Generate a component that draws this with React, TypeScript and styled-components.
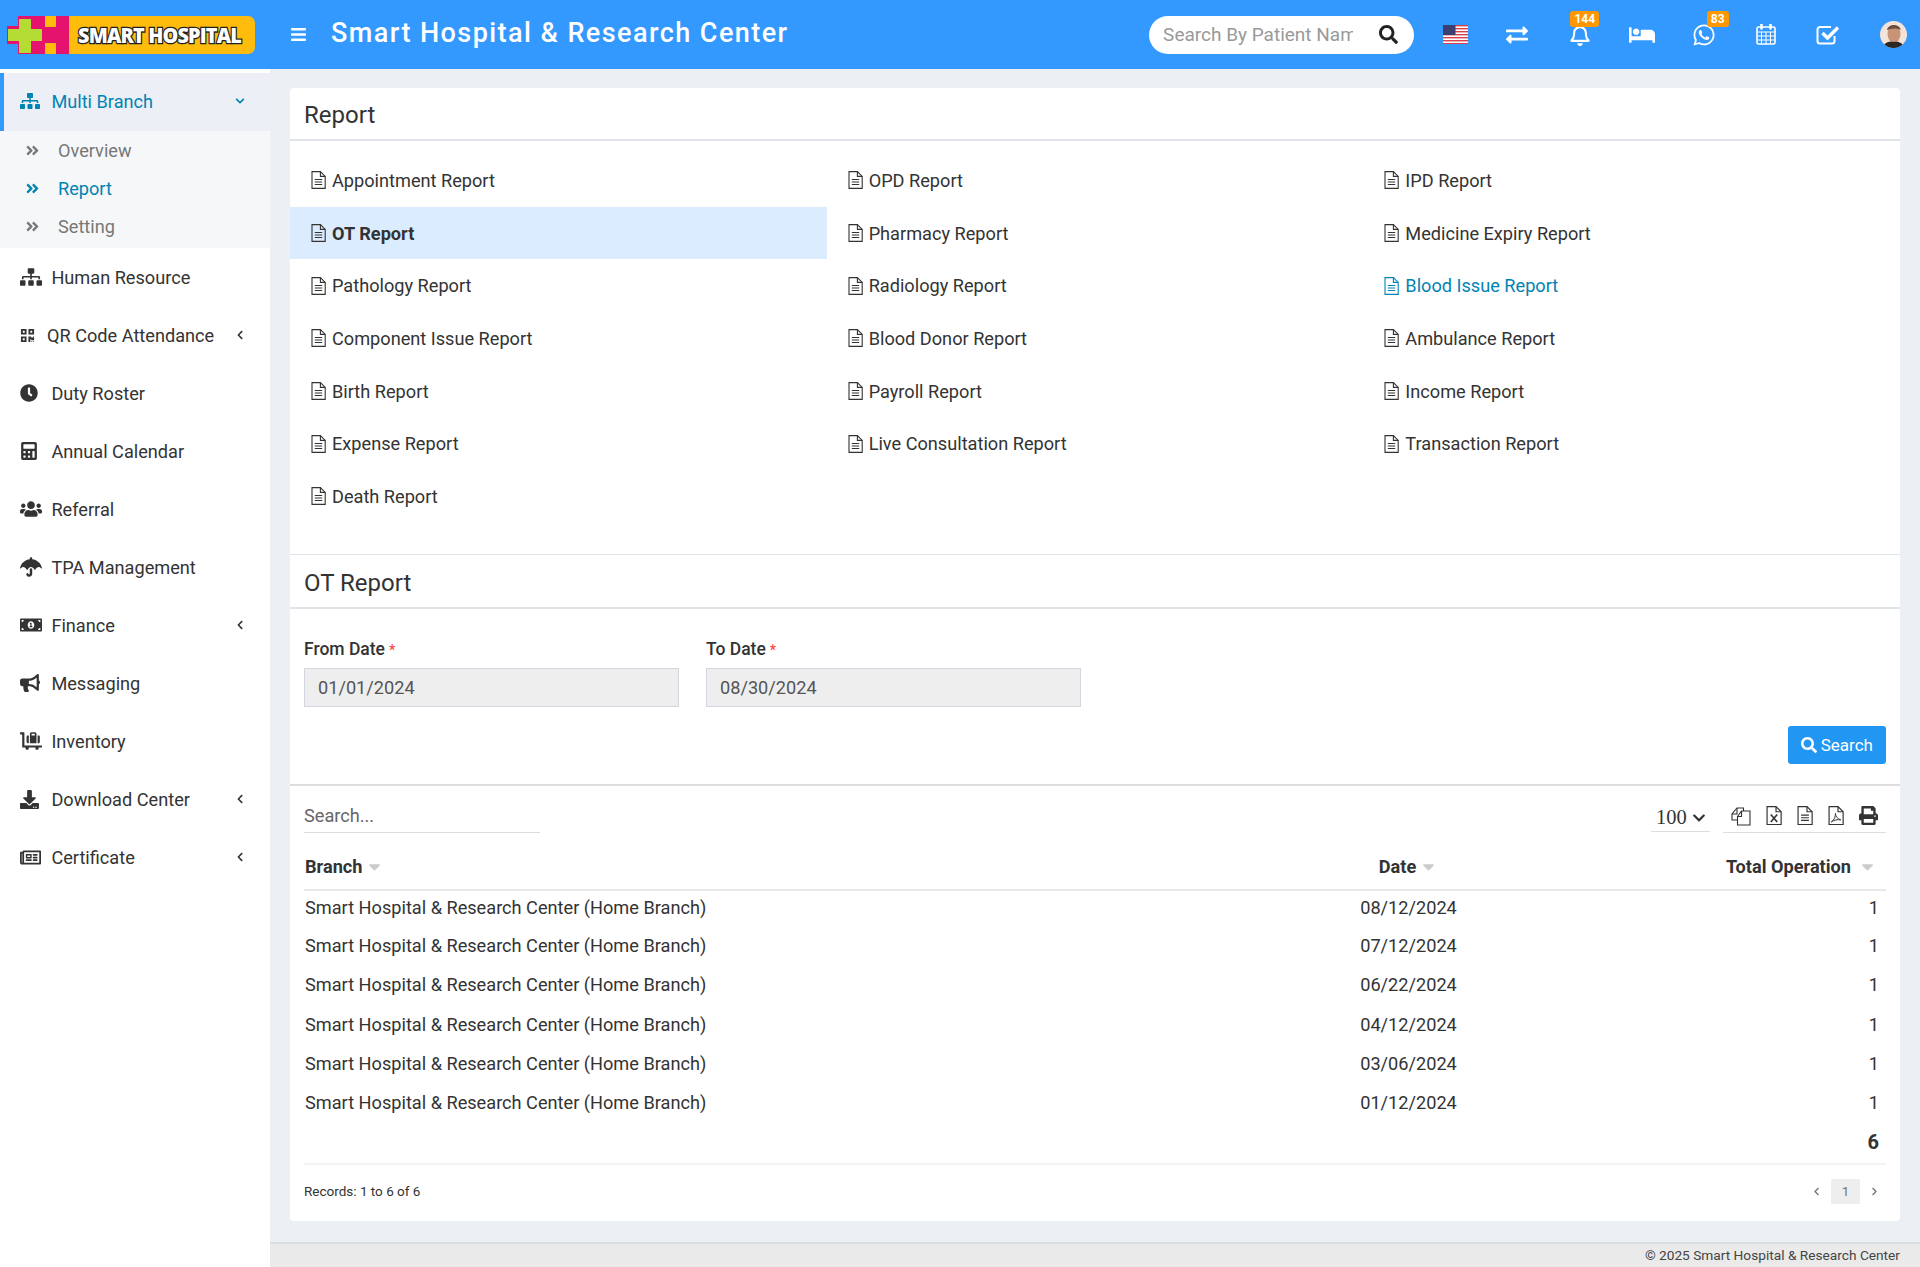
import React from "react";
import styled, { createGlobalStyle } from "styled-components";
import {
  FaAngleDoubleRight,
  FaBars,
  FaBed,
  FaBullhorn,
  FaCalculator,
  FaCaretDown,
  FaChevronDown,
  FaChevronLeft,
  FaChevronRight,
  FaClock,
  FaDownload,
  FaExchangeAlt,
  FaLuggageCart,
  FaMoneyBillAlt,
  FaPrint,
  FaQrcode,
  FaRegBell,
  FaRegNewspaper,
  FaSearch,
  FaSitemap,
  FaUmbrella,
  FaUsers,
  FaWhatsapp,
} from "react-icons/fa";

const GlobalStyle = createGlobalStyle`
  * { box-sizing: border-box; }
  body {
    margin: 0;
    background: #ecf0f5;
    color: #333;
    font-family: Roboto, "Liberation Sans", sans-serif;
  }
`;

const Page = styled.div`
  display: flex;
  flex-direction: column;
  width: 1920px;
  height: 1267px;
  overflow: hidden;
`;

const TopBar = styled.header`
  display: flex;
  align-items: center;
  flex: 0 0 69px;
  background: #3399ff;
  color: #fff;
`;

const LogoSlot = styled.div`
  display: flex;
  align-items: center;
  width: 270px;
  padding-left: 7px;
`;

const LogoPill = styled.div`
  display: flex;
  align-items: center;
  justify-content: center;
  width: 186px;
  height: 38px;
  padding-right: 5px;
  background: #ffbc0d;
  border-radius: 0 7px 7px 0;
`;

const LogoText = styled.span`
  display: block;
  font-family: "Open Sans", Roboto, sans-serif;
  font-size: 21.5px;
  font-weight: 800;
  color: #fff;
  white-space: nowrap;
  letter-spacing: -0.9px;
  -webkit-text-stroke: 2.6px #222;
  paint-order: stroke fill;
  transform: scaleX(0.92);
`;

const MenuToggle = styled.span`
  display: flex;
  margin-left: 20px;
  font-size: 17px;
`;

const AppTitle = styled.h1`
  margin: 0 0 4px 24px;
  font-size: 27px;
  font-weight: 500;
  letter-spacing: 1.44px;
  white-space: nowrap;
`;

const PatientSearch = styled.div`
  display: flex;
  align-items: center;
  justify-content: space-between;
  width: 265px;
  height: 38px;
  margin-left: auto;
  padding: 0 16px 0 14px;
  background: #fff;
  border-radius: 19px;
  color: #222;
  font-size: 19px;
`;

const PatientPlaceholder = styled.span`
  width: 190px;
  overflow: hidden;
  color: #999;
  font-size: 19px;
  white-space: nowrap;
`;

const NavList = styled.nav`
  display: flex;
  align-items: center;
  margin-left: 10px;
  padding-right: 13px;
`;

const NavSlot = styled.div`
  position: relative;
  display: flex;
  align-items: center;
  justify-content: center;
  width: 62.2px;
  height: 40px;
  font-size: ${(props: { $size?: number }) => props.$size ?? 22}px;
`;

const CountBadge = styled.span`
  position: absolute;
  top: -4px;
  left: ${(props: { $left: number }) => props.$left}px;
  padding: 0 4px;
  background: #ff9800;
  border-radius: 3px;
  color: #fff;
  font-size: 12px;
  font-weight: 700;
  line-height: 16px;
`;

const Avatar = styled.span`
  display: flex;
  width: 27px;
  height: 27px;
  margin-left: 20.6px;
  border-radius: 50%;
  overflow: hidden;
`;

const Body = styled.div`
  display: flex;
  flex: 1;
  min-height: 0;
`;

const Sidebar = styled.aside`
  flex: 0 0 270px;
  padding-top: 4px;
  background: #fff;
`;

const ActiveItem = styled.div`
  display: flex;
  align-items: center;
  height: 58px;
  padding: 0 21px 2px 16px;
  background: #eceff6;
  border-left: 4px solid #3399ff;
  color: #0084b4;
  font-size: 18.17px;
`;

const SubMenu = styled.div`
  display: flex;
  flex-direction: column;
  height: 117px;
  padding-bottom: 2px;
  background: #f6f7f9;
`;

const SubItem = styled.div<{ $active?: boolean }>`
  display: flex;
  align-items: center;
  flex: 1;
  padding-left: 25px;
  color: ${(props) => (props.$active ? "#0084b4" : "#777")};
  font-size: 18.17px;
  svg {
    margin-right: 18px;
    font-size: 15px;
  }
`;

const NavItem = styled.div`
  display: flex;
  align-items: center;
  height: 58px;
  padding: 0 21px 0 20px;
  color: #333;
  font-size: 18.17px;
`;

const NavIcon = styled.span<{ $slot?: number; $size?: number }>`
  display: flex;
  flex: 0 0 ${(props) => props.$slot ?? 31.4}px;
  font-size: ${(props) => props.$size ?? 22}px;
`;

const NavLabel = styled.span`
  flex: 1;
  white-space: nowrap;
`;

const Chevron = styled.span`
  display: flex;
  margin-right: 4px;
  font-size: 10px;
`;

const Content = styled.main`
  display: flex;
  flex: 1;
  flex-direction: column;
  min-width: 0;
`;

const ContentInner = styled.div`
  flex: 1;
  padding: 19px 20px 21px;
`;

const Card = styled.section`
  height: 100%;
  background: #fff;
  border-radius: 4px;
`;

const SectionHead = styled.div<{ $height: number; $top: number }>`
  display: flex;
  align-items: center;
  height: ${(props) => props.$height}px;
  padding: ${(props) => props.$top}px 0 0 14px;
  border-bottom: 2px solid #e0e3e8;
`;

const SectionTitle = styled.h2`
  margin: 0;
  font-size: 24px;
  font-weight: 400;
  color: #333;
`;

const ReportGrid = styled.div`
  display: grid;
  grid-template-columns: repeat(3, 1fr);
  grid-auto-rows: 52.7px;
  height: 414px;
  padding-top: 13px;
  border-bottom: 1px solid #e0e3e8;
`;

const ReportLink = styled.a<{ $selected?: boolean; $accent?: boolean }>`
  display: flex;
  align-items: center;
  padding-left: 21px;
  background: ${(props) => (props.$selected ? "#dcecff" : "transparent")};
  color: ${(props) => (props.$accent ? "#0084b4" : "#333")};
  font-size: 18.17px;
  font-weight: ${(props) => (props.$selected ? 700 : 400)};
  svg {
    margin-right: 6px;
  }
`;

const FilterRow = styled.div`
  display: flex;
  gap: 27px;
  padding: 30px 14px 0;
`;

const Field = styled.div`
  width: 375px;
`;

const FieldLabel = styled.label`
  display: block;
  height: 29px;
  font-size: 17.5px;
  font-weight: 500;
  line-height: 20px;
`;

const Required = styled.span`
  margin-left: 4px;
  color: #f44;
  font-size: 14px;
`;

const DateBox = styled.div`
  display: flex;
  align-items: center;
  height: 39px;
  padding-left: 13px;
  background: #eee;
  border: 1px solid #d2d6de;
  color: #555;
  font-size: 18.17px;
`;

const ActionRow = styled.div`
  display: flex;
  justify-content: flex-end;
  padding: 19px 14px 20px;
  border-bottom: 2px solid #ddd;
`;

const SearchButton = styled.button`
  display: flex;
  align-items: center;
  gap: 4px;
  height: 38px;
  padding: 0 13px;
  background: #2196f3;
  border: 0;
  border-radius: 3px;
  color: #fff;
  font-family: inherit;
  font-size: 17px;
  svg {
    font-size: 16px;
  }
`;

const TableArea = styled.div`
  padding: 0 14px;
`;

const Toolbar = styled.div`
  display: flex;
  align-items: flex-end;
  justify-content: space-between;
  height: 47px;
`;

const TableSearch = styled.div`
  width: 236px;
  height: 34px;
  padding-top: 6px;
  border-bottom: 1px solid #ddd;
  color: #666;
  font-size: 18.17px;
`;

const ToolbarRight = styled.div`
  display: flex;
  gap: 13px;
`;

const PageSize = styled.div`
  display: flex;
  align-items: center;
  gap: 5px;
  width: 59px;
  height: 34px;
  padding: 6px 0 0 5px;
  border-bottom: 1px solid #ddd;
  font-family: "Liberation Serif", serif;
  font-size: 20.5px;
  svg {
    font-size: 14px;
  }
`;

const ExportGroup = styled.div`
  display: flex;
  align-items: center;
  justify-content: space-around;
  width: 163px;
  height: 35px;
  padding-top: 1px;
  border-bottom: 1px solid #ddd;
  font-size: 19px;
  color: #333;
`;

const ReportTable = styled.table`
  width: 100%;
  border-collapse: collapse;
  table-layout: fixed;
  font-size: 18.17px;
`;

const HeadCell = styled.th<{ $align: string; $width?: number }>`
  width: ${(props) => (props.$width ? `${props.$width}px` : "auto")};
  height: 57px;
  padding: 10px 0 0 1px;
  border-bottom: 2px solid #e6e8eb;
  font-weight: 700;
  text-align: ${(props) => props.$align};
`;

const SortArrow = styled(FaCaretDown)<{ $gap?: number; $lead?: number }>`
  margin: 0 ${(props) => props.$gap ?? 0}px 0 ${(props) => props.$lead ?? 3}px;
  color: #ccc;
  font-size: 19px;
  vertical-align: -3px;
`;

const Cell = styled.td<{ $align?: string }>`
  height: 39.2px;
  padding: 0 ${(props) => (props.$align === "right" ? "7px" : "0")} 6px 1px;
  text-align: ${(props) => props.$align ?? "left"};
`;

const SumRow = styled.div`
  height: 40px;
  padding: 5px 7px 0 0;
  border-bottom: 2px solid #f2f3f5;
  font-size: 20px;
  font-weight: 700;
  text-align: right;
`;

const TableFooter = styled.div`
  display: flex;
  align-items: center;
  justify-content: space-between;
  height: 55px;
  padding-bottom: 3px;
  font-size: 13.5px;
`;

const Pager = styled.div`
  display: flex;
  align-items: center;
  gap: 10px;
  padding-right: 7px;
  color: #777;
  svg {
    font-size: 9px;
  }
`;

const PagerCurrent = styled.span`
  display: flex;
  align-items: center;
  justify-content: center;
  width: 29px;
  height: 25px;
  background: #eee;
`;

const PageFooter = styled.footer`
  flex: 0 0 25px;
  padding: 3px 20px 0 0;
  background: #eaeaea;
  border-top: 2px solid #d8dce3;
  color: #444;
  font-size: 13.7px;
  text-align: right;
`;

const reports = [
  "Appointment Report",
  "OPD Report",
  "IPD Report",
  "OT Report",
  "Pharmacy Report",
  "Medicine Expiry Report",
  "Pathology Report",
  "Radiology Report",
  "Blood Issue Report",
  "Component Issue Report",
  "Blood Donor Report",
  "Ambulance Report",
  "Birth Report",
  "Payroll Report",
  "Income Report",
  "Expense Report",
  "Live Consultation Report",
  "Transaction Report",
  "Death Report",
];

const navItems = [
  { label: "Human Resource", icon: <FaSitemap /> },
  { label: "QR Code Attendance", icon: <FaQrcode />, size: 15, slot: 27, arrow: true },
  { label: "Duty Roster", icon: <FaClock />, size: 18 },
  { label: "Annual Calendar", icon: <FaCalculator />, size: 18 },
  { label: "Referral", icon: <FaUsers /> },
  { label: "TPA Management", icon: <FaUmbrella /> },
  { label: "Finance", icon: <FaMoneyBillAlt />, arrow: true },
  { label: "Messaging", icon: <FaBullhorn />, size: 20 },
  { label: "Inventory", icon: <FaLuggageCart /> },
  { label: "Download Center", icon: <FaDownload />, size: 19, arrow: true },
  { label: "Certificate", icon: <FaRegNewspaper />, size: 21, arrow: true },
];

const rows = ["08/12/2024", "07/12/2024", "06/22/2024", "04/12/2024", "03/06/2024", "01/12/2024"];

function LogoMark() {
  return (
    <svg width="62" height="38" viewBox="0 0 62 38">
      <rect x="11" width="51" height="38" fill="#e6136e" />
      <rect y="10" width="12" height="18" fill="#e6136e" />
      <rect x="38" width="11" height="11" fill="#ffbc0d" />
      <rect x="38" y="27" width="11" height="11" fill="#ffbc0d" />
      <path d="M12 3h12v10h11v12H24v12H12V25H1V13h11z" fill="#b5dc35" />
    </svg>
  );
}

function Flag() {
  return (
    <svg width="25" height="19" viewBox="0 0 25 19">
      <rect width="25" height="19" fill="#fff" />
      {[0, 3, 6, 9, 12, 15, 18].map((y) => (
        <rect key={y} y={y} width="25" height="1.4" fill="#d8404a" />
      ))}
      <rect width="12.5" height="10" fill="#3c3f70" />
    </svg>
  );
}

function Face() {
  return (
    <svg width="27" height="27" viewBox="0 0 27 27">
      <rect width="27" height="27" fill="#f6e3d8" />
      <ellipse cx="14" cy="13" rx="6.5" ry="9" fill="#c89478" />
      <path d="M7 9c1-6 12-7 14 0-4-2-9-2-14 0z" fill="#6b5040" />
      <path d="M3 27c1-6 6-7 11-6 5-1 9 1 10 6z" fill="#2a2725" />
    </svg>
  );
}

function CalendarGrid() {
  return (
    <svg width="20" height="21" viewBox="0 0 20 21" fill="none" stroke="#fff">
      <rect x="1" y="3" width="18" height="17" rx="1.5" strokeWidth="1.6" />
      <path d="M1 8h18M1 12h18M1 16h18M5.5 8v12M10 8v12M14.5 8v12" strokeWidth="1" />
      <path d="M5.5 0.5v4M14.5 0.5v4" strokeWidth="2.6" strokeLinecap="round" />
    </svg>
  );
}

function CheckBox() {
  return (
    <svg width="24" height="20" viewBox="0 0 24 20" fill="none" stroke="#fff">
      <path d="M18.5 11v5a2.5 2.5 0 0 1-2.5 2.5H4A2.5 2.5 0 0 1 1.5 16V4.5A2.5 2.5 0 0 1 4 2h11" strokeWidth="2" />
      <path d="M6.5 8l5 5L22 2.5" strokeWidth="3.4" />
    </svg>
  );
}

function FileIcon({ size = 15, children }: { size?: number; children?: React.ReactNode }) {
  return (
    <svg width={size} height={(size * 18) / 15} viewBox="0 0 15 18" fill="none" stroke="currentColor" strokeWidth="1.1">
      <path d="M1 .6h8.4L14.2 5.4V17.4H1z" />
      <path d="M9.4 .6v4.8h4.8" />
      {children ?? <path d="M3.8 8.5h7.4M3.8 11h7.4M3.8 13.5h7.4" />}
    </svg>
  );
}

function CopyIcon() {
  return (
    <svg width="20" height="20" viewBox="0 0 20 20" fill="none" stroke="currentColor" strokeWidth="1.1">
      <path d="M6.5 14H1V8l5-6h6.5v3" />
      <path d="M1 8h5V2" />
      <path d="M6.5 10.5l4-5.5h8.5v14H6.5z" />
      <path d="M6.5 10.5h4V5" />
    </svg>
  );
}

export default function App() {
  return (
    <Page>
      <GlobalStyle />
      <TopBar>
        <LogoSlot>
          <LogoMark />
          <LogoPill>
            <LogoText>SMART HOSPITAL</LogoText>
          </LogoPill>
        </LogoSlot>
        <MenuToggle>
          <FaBars />
        </MenuToggle>
        <AppTitle>Smart Hospital &amp; Research Center</AppTitle>
        <PatientSearch>
          <PatientPlaceholder>Search By Patient Name</PatientPlaceholder>
          <FaSearch />
        </PatientSearch>
        <NavList>
          <NavSlot>
            <Flag />
          </NavSlot>
          <NavSlot>
            <FaExchangeAlt />
          </NavSlot>
          <NavSlot>
            <FaRegBell />
            <CountBadge $left={22}>144</CountBadge>
          </NavSlot>
          <NavSlot $size={26}>
            <FaBed />
          </NavSlot>
          <NavSlot $size={24}>
            <FaWhatsapp />
            <CountBadge $left={34}>83</CountBadge>
          </NavSlot>
          <NavSlot>
            <CalendarGrid />
          </NavSlot>
          <NavSlot>
            <CheckBox />
          </NavSlot>
          <Avatar>
            <Face />
          </Avatar>
        </NavList>
      </TopBar>
      <Body>
        <Sidebar>
          <ActiveItem>
            <NavIcon $size={20}>
              <FaSitemap />
            </NavIcon>
            <NavLabel>Multi Branch</NavLabel>
            <Chevron>
              <FaChevronDown />
            </Chevron>
          </ActiveItem>
          <SubMenu>
            <SubItem>
              <FaAngleDoubleRight />
              Overview
            </SubItem>
            <SubItem $active>
              <FaAngleDoubleRight />
              Report
            </SubItem>
            <SubItem>
              <FaAngleDoubleRight />
              Setting
            </SubItem>
          </SubMenu>
          {navItems.map((item) => (
            <NavItem key={item.label}>
              <NavIcon $slot={item.slot} $size={item.size}>
                {item.icon}
              </NavIcon>
              <NavLabel>{item.label}</NavLabel>
              {item.arrow && (
                <Chevron>
                  <FaChevronLeft />
                </Chevron>
              )}
            </NavItem>
          ))}
        </Sidebar>
        <Content>
          <ContentInner>
            <Card>
              <SectionHead $height={53} $top={2}>
                <SectionTitle>Report</SectionTitle>
              </SectionHead>
              <ReportGrid>
                {reports.map((name) => (
                  <ReportLink key={name} $selected={name === "OT Report"} $accent={name === "Blood Issue Report"}>
                    <FileIcon />
                    {name}
                  </ReportLink>
                ))}
              </ReportGrid>
              <SectionHead $height={54} $top={4}>
                <SectionTitle>OT Report</SectionTitle>
              </SectionHead>
              <FilterRow>
                <Field>
                  <FieldLabel>
                    From Date<Required>*</Required>
                  </FieldLabel>
                  <DateBox>01/01/2024</DateBox>
                </Field>
                <Field>
                  <FieldLabel>
                    To Date<Required>*</Required>
                  </FieldLabel>
                  <DateBox>08/30/2024</DateBox>
                </Field>
              </FilterRow>
              <ActionRow>
                <SearchButton>
                  <FaSearch />
                  Search
                </SearchButton>
              </ActionRow>
              <TableArea>
                <Toolbar>
                  <TableSearch>Search...</TableSearch>
                  <ToolbarRight>
                    <PageSize>
                      100 <FaChevronDown />
                    </PageSize>
                    <ExportGroup>
                      <CopyIcon />
                      <FileIcon size={16}>
                        <path d="M4.5 8l6 7M10.5 8l-6 7" strokeWidth="1.5" />
                      </FileIcon>
                      <FileIcon size={16} />
                      <FileIcon size={16}>
                        <path d="M3 15c3-2 4-5 4-8 0 3 2 5 5 6-3-.5-6 0-9 2z" strokeWidth="0.9" />
                      </FileIcon>
                      <FaPrint />
                    </ExportGroup>
                  </ToolbarRight>
                </Toolbar>
                <ReportTable>
                  <thead>
                    <tr>
                      <HeadCell $align="left" $width={1040}>
                        Branch
                        <SortArrow />
                      </HeadCell>
                      <HeadCell $align="center" $width={128}>
                        Date
                        <SortArrow />
                      </HeadCell>
                      <HeadCell $align="right">
                        Total Operation
                        <SortArrow $lead={7} $gap={9} />
                      </HeadCell>
                    </tr>
                  </thead>
                  <tbody>
                    {rows.map((date) => (
                      <tr key={date}>
                        <Cell>Smart Hospital &amp; Research Center (Home Branch)</Cell>
                        <Cell $align="center">{date}</Cell>
                        <Cell $align="right">1</Cell>
                      </tr>
                    ))}
                  </tbody>
                </ReportTable>
                <SumRow>6</SumRow>
                <TableFooter>
                  <span>Records: 1 to 6 of 6</span>
                  <Pager>
                    <FaChevronLeft />
                    <PagerCurrent>1</PagerCurrent>
                    <FaChevronRight />
                  </Pager>
                </TableFooter>
              </TableArea>
            </Card>
          </ContentInner>
          <PageFooter>© 2025 Smart Hospital &amp; Research Center</PageFooter>
        </Content>
      </Body>
    </Page>
  );
}
